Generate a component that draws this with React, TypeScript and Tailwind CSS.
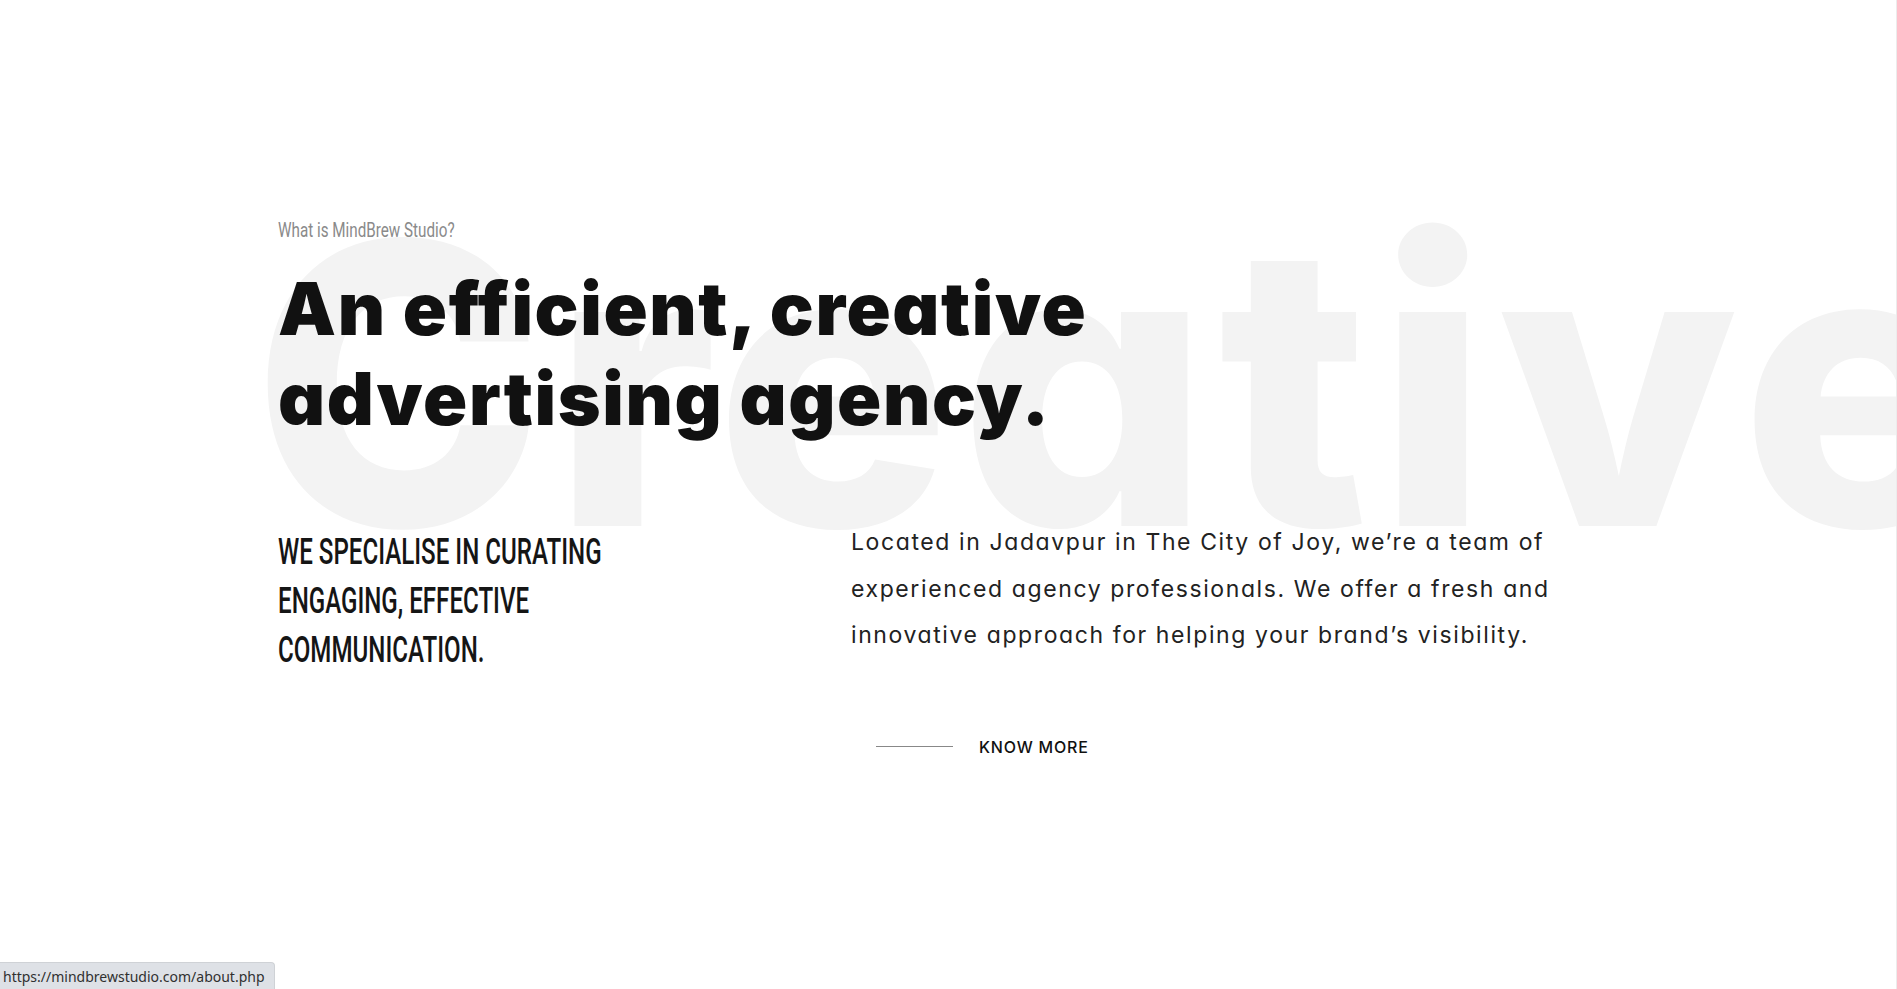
export default function App() {
  return (
    <div className="relative min-h-screen w-full overflow-hidden bg-white border-r border-[#ececec]">
      {/* big faded word in the back */}
      <span className="pointer-events-none absolute left-[252px] top-[188px] whitespace-nowrap font-['Inter',sans-serif] text-[392px] font-extrabold leading-none tracking-[9px] text-[#f3f3f3] select-none [font-feature-settings:'cv11']">
        Creative
      </span>

      <section className="relative z-10 mx-auto w-[1340px] pt-[218px]">
        <p className="font-['Roboto',sans-serif] text-[21px] leading-[24px] text-[#8a8a8a] origin-left scale-x-[0.725] whitespace-nowrap">
          What is MindBrew Studio?
        </p>

        <h1 className="mt-[22px] font-['Inter',sans-serif] text-[73px] font-black leading-[90px] tracking-[1.6px] text-[#111111] [font-feature-settings:'cv11']">
          An efficient, creative
          <br />
          advertising agency.
        </h1>

        <div className="mt-[75px] grid grid-cols-[573px_1fr] items-start">
          <div className="pt-[9px]">
            <p className="origin-left scale-x-[0.67] whitespace-nowrap font-['Roboto',sans-serif] text-[36px] font-medium leading-[49px] text-[#151515]">
              WE SPECIALISE IN CURATING
              <br />
              ENGAGING, EFFECTIVE
              <br />
              COMMUNICATION.
            </p>
          </div>

          <div>
            <p className="whitespace-nowrap font-['Inter',sans-serif] text-[23px] font-normal leading-[46.5px] tracking-[1.6px] text-[#222222] [font-feature-settings:'cv11']">
              Located in Jadavpur in The City of Joy, we’re a team of
              <br />
              experienced agency professionals. We offer a fresh and
              <br />
              innovative approach for helping your brand’s visibility.
            </p>

            <a href="#" className="ml-[25px] mt-[76px] flex items-center gap-[26px] text-[#111111]">
              <span className="h-px w-[77px] bg-[#888888]" />
              <span className="font-['Inter',sans-serif] text-[16px] font-medium leading-[24px] tracking-[0.8px]">
                KNOW MORE
              </span>
            </a>
          </div>
        </div>
      </section>

      {/* browser status bubble */}
      <div className="absolute bottom-0 left-0 z-20 flex h-[27px] w-[275px] items-center rounded-tr-[4px] border-t border-r border-[#cfd2d6] bg-[#dee1e6] pl-[3px]">
        <span className="font-['Noto_Sans',sans-serif] text-[14px] text-[#303030]">
          https://mindbrewstudio.com/about.php
        </span>
      </div>
    </div>
  )
}
